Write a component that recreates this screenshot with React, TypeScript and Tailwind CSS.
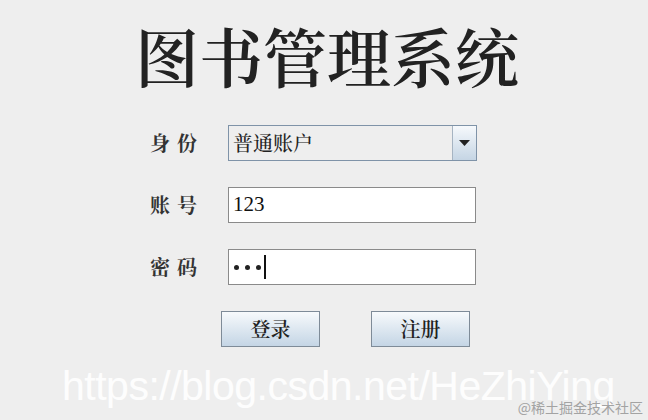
import React from 'react';

const cjk = { fontFamily: '"Noto Serif CJK SC", "Noto Sans CJK SC", serif' };
const serif = { fontFamily: '"Liberation Serif", "Noto Serif CJK SC", "Noto Sans CJK SC", serif' };

const Label: React.FC<{ text: string }> = ({ text }) => (
  <span className="w-[78px] text-[20px] leading-none tracking-[7px] font-bold text-[#333]" style={cjk}>
    {text}
  </span>
);

const LoginForm: React.FC = () => {
  return (
    <div className="relative w-[648px] h-[420px] bg-[#eeeeee] overflow-hidden">
      <h1
        className="pt-[22px] pl-[135px] text-[64px] leading-[64px] font-semibold text-[#222]"
        style={cjk}
      >
        图书管理系统
      </h1>

      <div className="flex flex-col mt-[39px] pl-[150px] gap-[26px]">
        {/* 身份 */}
        <div className="flex items-center">
          <Label text="身份" />
          <div className="flex w-[249px] h-[36px] border border-[#7f93a8] bg-[#eeeeee]">
            <div className="flex-1 flex items-center pl-[4px] text-[20px] font-medium text-[#222]" style={cjk}>
              普通账户
            </div>
            <div className="w-[24px] flex items-center justify-center border-l border-[#a6b4c2] bg-gradient-to-b from-[#f6f9fc] to-[#c5d5e4]">
              <svg width="11" height="6" viewBox="0 0 11 6">
                <path d="M0 0 H11 L5.5 6 Z" fill="#222" />
              </svg>
            </div>
          </div>
        </div>

        {/* 账号 */}
        <div className="flex items-center">
          <Label text="账号" />
          <div className="flex items-center w-[248px] h-[36px] border border-[#8a8a8a] bg-white pl-[4px] text-[21px] text-[#111]" style={serif}>
            123
          </div>
        </div>

        {/* 密码 */}
        <div className="flex items-center">
          <Label text="密码" />
          <div className="flex items-center gap-[6px] w-[248px] h-[36px] border border-[#8a8a8a] bg-white pl-[5px]">
            <span className="w-[5px] h-[5px] rounded-full bg-[#222]" />
            <span className="w-[5px] h-[5px] rounded-full bg-[#222]" />
            <span className="w-[5px] h-[5px] rounded-full bg-[#222]" />
            <span className="w-[2px] h-[24px] bg-[#111] -ml-[3px]" />
          </div>
        </div>
      </div>

      {/* buttons */}
      <div className="flex gap-[51px] mt-[26px] pl-[221px]">
        {['登录', '注册'].map((t) => (
          <button
            key={t}
            className="w-[99px] h-[36px] border border-[#7e8b98] bg-gradient-to-b from-[#f7fafc] to-[#c4d5e5] text-[20px] font-semibold text-[#222] flex items-center justify-center"
            style={cjk}
          >
            {t}
          </button>
        ))}
      </div>

      {/* watermark */}
      <div
        className="absolute left-[62px] top-[366px] text-[41px] leading-none text-white/90 tracking-[-0.5px]"
        style={{ fontFamily: '"Liberation Sans", Arial, sans-serif' }}
      >
        https://blog.csdn.net/HeZhiYing
      </div>
      <div
        className="absolute right-[5px] bottom-[6px] text-[14px] leading-none text-[#a3a3a3]"
        style={{ fontFamily: '"Noto Sans CJK SC", sans-serif' }}
      >
        @稀土掘金技术社区
      </div>
    </div>
  );
};

export default function App() {
  return <LoginForm />;
}
